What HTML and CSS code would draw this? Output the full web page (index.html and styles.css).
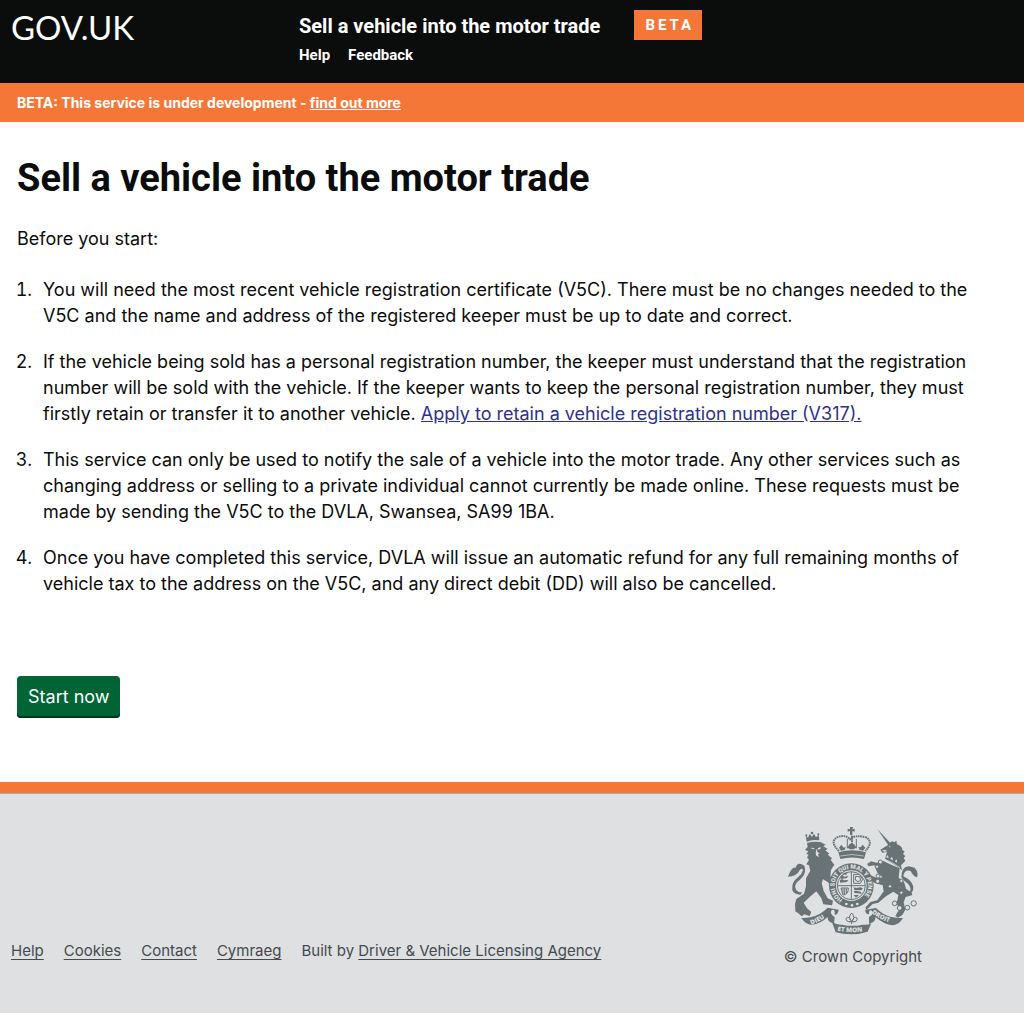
FILE: index.html
```html
<!DOCTYPE html>
<html lang="en">
<head>
  <meta charset="utf-8">
  <meta name="viewport" content="width=device-width, initial-scale=1">
  <title>Sell a vehicle into the motor trade</title>
  <link rel="stylesheet" href="styles.css">
</head>
<body>
  <header class="site-header">
    <a class="logo" href="#">GOV.UK</a>
    <div class="service">
      <div class="service-main">
        <a class="service-name" href="#">Sell a vehicle into the motor trade</a>
        <nav class="service-nav">
          <a href="#">Help</a>
          <a href="#">Feedback</a>
        </nav>
      </div>
      <span class="phase-badge">BETA</span>
    </div>
  </header>

  <div class="beta-banner">BETA: This service is under development - <a href="#">find out more</a></div>

  <main class="content">
    <h1>Sell a vehicle into the motor trade</h1>
    <p class="intro">Before you start:</p>
    <ol class="steps">
      <li>You will need the most recent vehicle registration certificate (V5C). There must be no changes needed to the V5C and the name and address of the registered keeper must be up to date and correct.</li>
      <li>If the vehicle being sold has a personal registration number, the keeper must understand that the registration number will be sold with the vehicle. If the keeper wants to keep the personal registration number, they must firstly retain or transfer it to another vehicle. <a href="#">Apply to retain a vehicle registration number (V317).</a></li>
      <li>This service can only be used to notify the sale of a vehicle into the motor trade. Any other services such as changing address or selling to a private individual cannot currently be made online. These requests must be made by sending the V5C to the DVLA, Swansea, SA99 1BA.</li>
      <li>Once you have completed this service, DVLA will issue an automatic refund for any full remaining months of vehicle tax to the address on the V5C, and any direct debit (DD) will also be cancelled.</li>
    </ol>
    <button class="button" type="button">Start now</button>
  </main>

  <footer class="site-footer">
    <ul class="footer-links">
      <li><a href="#">Help</a></li>
      <li><a href="#">Cookies</a></li>
      <li><a href="#">Contact</a></li>
      <li><a href="#">Cymraeg</a></li>
      <li>Built by <a href="#">Driver &amp; Vehicle Licensing Agency</a></li>
    </ul>
    <div class="copyright">
      <svg class="crest" viewBox="36 33 393 327" aria-hidden="true">
        <defs>
          <path id="garter-arc" d="M203 254 A50 50 0 1 1 255 254"/>
          <path id="motto-left" d="M109 329 Q142 318 176 288"/>
          <path id="motto-mid" d="M187 347 Q231 357 290 344"/>
          <path id="motto-right" d="M290 294 Q317 317 366 328"/>
        </defs>
        <g class="ink">
          <!-- lion -->
          <path d="M95 80 L92 61 L99 68 L104 57 L111 65 L117 56 L123 67 L131 59 L133 76 Q112 72 95 80Z"/>
          <circle cx="111" cy="54" r="4"/><circle cx="94" cy="61" r="3"/><circle cx="130" cy="58" r="3"/>
          <path d="M96 84 Q113 78 136 81 L152 89 L145 94 L158 102 L151 106 L163 116 L158 119 L171 130 L167 135 L178 149 L168 165 L166 184 L180 196 L181 206 L169 215 L159 202 L144 193 L140 205 L146 228 L158 250 L174 257 L171 271 L145 268 L139 250 L124 229 L104 246 L86 263 L96 280 L109 291 L104 303 L88 298 L80 304 L70 295 L61 289 L60 267 L64 252 L87 236 L93 214 L93 190 L106 167 L102 151 L94 148 L102 135 L96 127 L101 119 L94 117 L100 109 L90 105 L98 96 Z"/>
          <path d="M88 152 Q67 138 62 158 Q50 155 39 185 Q65 184 75 164 Q81 158 84 165 Q82 176 69 187 Q48 202 52 226 Q58 239 76 239 L82 232 Q64 232 61 218 Q59 204 75 194 Q97 174 88 152Z"/>
          <!-- unicorn -->
          <path d="M307 42 L346 84 L340 91 Z"/>
          <path d="M338 91 Q349 75 358 82 L364 77 L366 88 Q381 93 382 104 L389 110 L384 116 L391 124 L386 129 L391 138 L378 151 L381 166 Q364 151 330 132 L336 111 L322 113 L316 104 Z"/>
          <path d="M325 138 Q351 151 374 160 L371 188 L387 200 L393 221 L410 233 L412 240 L392 246 L386 262 L391 284 L382 300 L369 308 L361 302 L374 282 L365 266 L370 240 L355 230 L333 244 L310 263 L293 267 L275 284 L271 278 L286 261 L307 256 L326 229 L323 211 L299 204 L284 192 L287 181 L307 190 L323 187 L307 173 L298 151 L281 154 L276 147 L288 139 L305 143 Z"/>
          <path d="M379 186 Q379 155 402 154 L419 158 Q432 172 426 187 Q414 184 407 168 Q388 162 385 184 Q403 193 410 203 Q421 222 408 235 L404 230 Q411 219 399 206 Q383 195 379 186Z"/>
          <!-- motto scroll -->
          <path d="M79 309 Q91 310 106 307 Q137 300 158 278 L191 284 Q189 300 179 299 Q181 280 170 286 Q162 295 179 307 L177 326 Q156 321 158 306 Q136 327 110 329 Q92 329 79 309Z"/>
          <path d="M171 322 Q188 331 201 329 Q232 336 263 329 Q278 331 289 325 L278 350 Q232 365 182 352Z"/>
          <path d="M384 309 Q368 310 353 307 Q328 303 303 279 L271 284 Q270 297 282 298 Q281 282 291 287 Q298 296 282 306 L282 326 Q304 321 301 306 Q327 328 352 331 Q371 331 384 309Z"/>
          <!-- crown -->
          <path d="M225 36 h9 l-2 7 7 -2 v9 l-7 -2 v12 h-7 v-12 l-7 2 v-9 l7 2Z"/>
          <path d="M190 112 Q231 99 273 112 L267 132 Q231 123 196 132Z"/>
          <path d="M198 107 l-6 -9 7 -9 7 9 6 -2 -3 9Z M225 103 l-8 -5 6 -10 8 -5 8 6 5 9 -9 5Z M264 107 l7 -9 -8 -9 -6 8 -7 -1 4 9Z"/>
        </g>
        <g class="line">
          <path class="beads" d="M192 108 Q163 81 186 67 Q210 57 225 73 Q238 58 273 67 Q297 81 271 108"/>
          <path d="M217 100 V72 M244 100 V72"/>
          <path class="beads" d="M231 62 V93"/>
        </g>
        <!-- garter and shield -->
        <g>
          <circle class="ink" cx="229" cy="212" r="67"/>
          <circle class="paper" cx="229" cy="212" r="46"/>
          <circle class="line" cx="229" cy="212" r="42"/>
          <path class="line" d="M229 171 V253 M188 212 H270"/>
          <path class="ink" d="M196 185 l7 -5 5 5 12 -2 -4 6 -19 3Z M194 196 l7 -4 6 4 13 -1 -4 6 -20 2Z M202 175 l8 -2 8 3 -6 4Z M236 217 l8 2 12 -2 8 3 -5 6 -21 -1Z M236 229 l7 -2 14 3 4 6 -22 -2Z M236 240 l16 0 -9 8Z"/>
          <path class="line" d="M236 178 H253 L263 193 L256 205 H236Z M242 184 l12 1 3 11 -8 4 -8 -5Z"/>
          <path class="line" d="M198 219 H220 Q220 240 204 240 Z M204 220 V237 M209 220 V238 M214 220 V236"/>
          <g class="paper">
            <circle cx="214" cy="267" r="4"/><circle cx="231" cy="271" r="4"/><circle cx="247" cy="267" r="4"/>
          </g>
        </g>
        <g class="motto">
          <text class="garter"><textPath href="#garter-arc">HONI SOIT QUI MAL Y PENSE</textPath></text>
          <text><textPath href="#motto-left">DIEU</textPath></text>
          <text><textPath href="#motto-mid">ET MON</textPath></text>
          <text><textPath href="#motto-right">DROIT</textPath></text>
        </g>
        <!-- fleur below the garter -->
        <path class="line" d="M230 294 Q217 307 230 319 Q243 307 230 294 M226 320 Q211 321 214 309 Q223 303 227 316 M234 320 Q249 321 246 309 Q237 303 233 316 M222 320 H238 M230 320 V327"/>
        <!-- faces and collar -->
        <path class="paper" d="M108 98 l8 1 3 4 -9 -2Z M129 99 l9 -2 -2 5 -8 2Z M124 101 l4 11 6 3 -5 3 3 8 -8 -4 -2 -7Z"/>
        <path class="paper" d="M340 96 l5 -3 2 4Z M321 106 l10 -1 6 3 -10 2Z"/>
        <path class="cut-line" d="M327 132 Q351 140 375 158 M196 123 Q231 114 266 123"/>
        <path class="paper" d="M333 127 l5 -7 3 9Z M345 132 l6 -7 3 10Z M359 138 l6 -5 1 10Z"/>
        <!-- chain -->
        <g class="ring">
          <circle cx="316" cy="141" r="6"/><circle cx="306" cy="155" r="5"/><circle cx="309" cy="183" r="6"/>
          <circle cx="308" cy="199" r="6"/><circle cx="345" cy="214" r="5"/><circle cx="379" cy="198" r="5"/>
          <circle cx="379" cy="233" r="5"/><circle cx="359" cy="265" r="7"/><circle cx="374" cy="279" r="7"/>
          <circle cx="397" cy="278" r="7"/><circle cx="416" cy="265" r="8"/>
        </g>
      </svg>
      <a href="#">© Crown Copyright</a>
    </div>
  </footer>
</body>
</html>
```
FILE: styles.css
```css
* {
  box-sizing: border-box;
}

body {
  margin: 0;
  min-height: 100vh;
  display: flex;
  flex-direction: column;
  background: #fff;
  color: #0b0c0c;
  font: 18px/26px Inter, "Noto Sans", sans-serif;
}

.site-header {
  display: flex;
  min-height: 83px;
  padding: 10px 11px;
  background: #0b0c0c;
  font-family: Roboto, sans-serif;
  font-weight: 700;
}

.site-header a {
  color: #fff;
  text-decoration: none;
}

.logo {
  flex: 0 0 288px;
  font: 33px/34px Lato, sans-serif;
}

.service {
  display: flex;
  align-items: flex-start;
  gap: 34px;
}

.service-name {
  display: block;
  font-size: 20px;
  line-height: 32px;
}

.service-nav {
  display: flex;
  gap: 18px;
  font-size: 15px;
  line-height: 26px;
}

.phase-badge {
  padding: 0 8px 0 11px;
  background: #f47738;
  color: #fff;
  font-size: 15px;
  line-height: 30px;
  letter-spacing: 3px;
}

.beta-banner {
  padding: 7px 17px 6px;
  background: #f47738;
  color: #fff;
  font-size: 14px;
  font-weight: 700;
}

.beta-banner a {
  color: inherit;
}

.content {
  padding: 31px 17px 64px;
}

h1 {
  margin: 0 0 23px;
  font: 700 38px/50px Roboto, sans-serif;
}

.intro {
  margin: 0 0 25px;
}

.steps {
  margin: 0 0 79px;
  padding: 0 20px;
}

.steps li {
  margin-bottom: 20px;
  padding-left: 6px;
}

.steps a {
  color: #2e3191;
}

.button {
  display: block;
  padding: 7px 11px;
  border: 0;
  border-radius: 4px;
  background: #006435;
  box-shadow: inset 0 -2px 0 #003618;
  color: #fff;
  font: inherit;
  line-height: 28px;
}

.site-footer {
  flex: 1;
  display: flex;
  justify-content: space-between;
  align-items: flex-start;
  padding: 33px 102px 32px 11px;
  border-top: 11px solid #f47738;
  background: #dee0e2;
  box-shadow: inset 0 1px 0 #a1acb2;
  color: #454a4d;
  font-size: 15px;
}

.site-footer a {
  color: inherit;
}

.footer-links {
  display: flex;
  gap: 20px;
  margin: 0;
  padding: 112px 0 0;
  list-style: none;
}

.footer-links a {
  text-underline-offset: 3px;
}

.copyright {
  display: flex;
  flex-direction: column;
  align-items: center;
  gap: 9px;
}

.copyright a {
  text-decoration: none;
}

.crest {
  display: block;
  width: 131px;
  height: 109px;
}

.ink {
  fill: #697375;
}

.paper {
  fill: #dee0e2;
}

.line {
  fill: none;
  stroke: #697375;
  stroke-width: 3;
}

.beads {
  stroke-width: 6;
  stroke-dasharray: 5 2;
}

.cut-line {
  fill: none;
  stroke: #dee0e2;
  stroke-width: 2;
}

.ring {
  fill: #dee0e2;
  stroke: #697375;
  stroke-width: 3;
}

.motto {
  fill: #dee0e2;
  font: 800 19px "Open Sans", sans-serif;
}

.garter {
  font: 900 18px Roboto, sans-serif;
}
```
